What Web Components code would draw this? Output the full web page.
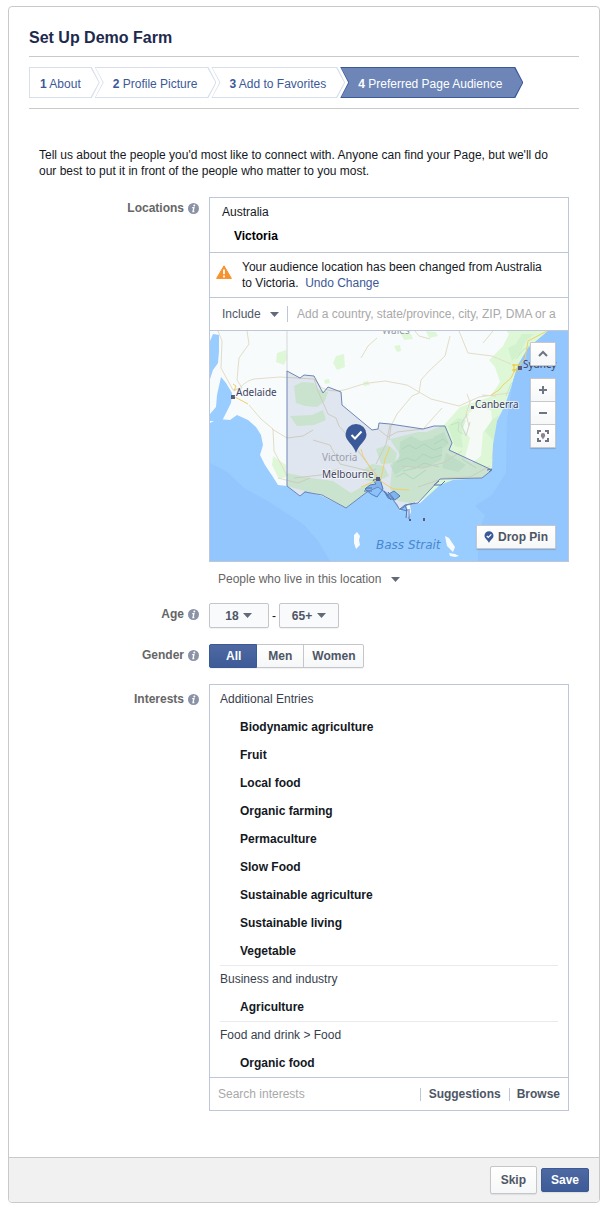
<!DOCTYPE html>
<html lang="en">
<head>
<meta charset="utf-8">
<meta name="viewport" content="width=device-width, initial-scale=1">
<title>Set Up Demo Farm</title>
<style>
  body {
    margin: 6px 8px 5px;
    background: #fff;
    color: #141823;
    font: 12px/16px "Liberation Sans", Arial, sans-serif;
  }
</style>
</head>
<body>
<setup-card>
  <h1 slot="title">Set Up Demo Farm</h1>
  <step-trail slot="steps">
    <step-item number="1" first>About</step-item>
    <step-item number="2">Profile Picture</step-item>
    <step-item number="3">Add to Favorites</step-item>
    <step-item number="4" current>Preferred Page Audience</step-item>
  </step-trail>
  <audience-form></audience-form>
  <action-button slot="actions" size="large">Skip</action-button>
  <action-button slot="actions" primary>Save</action-button>
</setup-card>

<script>
const define = (name, html, setup) => {
  const template = document.createElement('template');
  template.innerHTML = '<style>*, *::before, *::after { box-sizing: border-box; } :host([hidden]) { display: none; }</style>' + html;
  customElements.define(name, class extends HTMLElement {
    constructor() {
      super();
      this.attachShadow({ mode: 'open' }).append(template.content.cloneNode(true));
    }
    connectedCallback() { if (setup) setup(this, this.shadowRoot); }
  });
};

define('setup-card', `
  <style>
    :host { display: block; box-sizing: border-box; border: 1px solid #c8c9cb; border-radius: 4px; overflow: hidden; }
    header { padding: 21px 20px 0; }
    ::slotted(h1) { margin: 0; padding-bottom: 8px; font-size: 16px; line-height: 20px; font-weight: bold; color: #1d2a4d; }
    nav { padding: 10px 0; border: solid #c8c9cb; border-width: 1px 0; }
    main { padding: 38px 30px 46px; }
    footer { display: flex; align-items: center; justify-content: flex-end; gap: 4px; padding: 8px 10px; border-top: 1px solid #c8c9cb; background: #f1f1f1; }
  </style>
  <header>
    <slot name="title"></slot>
    <nav aria-label="Setup steps"><slot name="steps"></slot></nav>
  </header>
  <main><slot></slot></main>
  <footer><slot name="actions"></slot></footer>`);

define('step-trail', `
  <style>:host { display: flex; }</style>
  <slot></slot>`);

define('step-item', `
  <style>
    :host { display: block; flex: none; margin-left: -5px; --edge: #d8dfea; --fill: #fff; --ink: #3b5998; --notch: 8px; }
    :host([first]) { margin-left: 0; --notch: 0px; }
    :host([current]) { --edge: #3b5998; --fill: #6d86b7; --ink: #fff; }
    a {
      position: relative; display: block; height: 31px; padding: 2px 19px 0 18px; line-height: 31px;
      color: var(--ink); text-decoration: none; white-space: nowrap; background: var(--edge);
    }
    a, a::before { clip-path: polygon(0 0, calc(100% - 8px) 0, 100% 50%, calc(100% - 8px) 100%, 0 100%, var(--notch) 50%); }
    a::before { content: ""; position: absolute; inset: 1px; background: var(--fill); }
    :host([first]) a { padding-left: 11px; }
    :host([current]) a { padding-right: 21px; }
    span { position: relative; }
  </style>
  <a href="#"><span><b></b> <slot></slot></span></a>`,
  (host, root) => {
    root.querySelector('b').textContent = host.getAttribute('number');
    if (host.hasAttribute('current')) root.querySelector('a').setAttribute('aria-current', 'step');
  });

define('action-button', `
  <style>
    :host { display: block; }
    button {
      display: block; height: 24px; padding: 0 9px; border: 1px solid #c4c6ca; border-radius: 2px;
      background: linear-gradient(#fff, #f6f7f8); color: #4e5665; font: bold 12px/20px "Liberation Sans", Arial, sans-serif;
      box-shadow: 0 1px 1px rgba(0, 0, 0, .08); cursor: pointer;
    }
    :host([size="large"]) button { height: 28px; padding: 0 10px; }
    :host([primary]) button { border-color: #3b5998; background: linear-gradient(#4e69a2, #3e5b98); color: #fff; }
  </style>
  <button type="button"><slot></slot></button>`);

define('info-icon', `
  <style>:host { display: block; width: 11px; height: 11px; } svg { display: block; }</style>
  <svg width="11" height="11" viewBox="0 0 11 11" aria-hidden="true">
    <circle cx="5.5" cy="5.5" r="5.5" fill="#8b92a6"/>
    <circle cx="6.3" cy="2.6" r="1" fill="#fff"/>
    <path d="M4.2 4.6h1.7L5 8.5h1.3" fill="none" stroke="#fff" stroke-width="1.3"/>
  </svg>`);

define('form-row', `
  <style>
    :host { display: grid; grid-template-columns: 160px minmax(0, 1fr); column-gap: 10px; }
    .label { display: flex; align-items: center; justify-content: flex-end; align-self: start; gap: 4px; padding-top: 3px; color: #666; font-weight: bold; }
    :host([tall]) .label { padding-top: 7px; }
    info-icon { margin-top: 1px; }
  </style>
  <div class="label"><slot name="label"></slot><info-icon></info-icon></div>
  <div><slot></slot></div>`);

define('location-box', `
  <style>
    :host { display: block; border: 1px solid #bdc7d8; }
    dl { margin: 0; padding: 6px 12px 8px; }
    dd { margin: 8px 0 0 12px; font-weight: bold; color: #000; }
    .notice { display: flex; align-items: flex-start; gap: 10px; padding: 6px; border-top: 1px solid #bdc7d8; }
    .notice svg { flex: none; margin-top: 6px; }
    .notice p { margin: 0; padding-right: 8px; }
    ::slotted(.search) { height: 34px; border: solid #bdc7d8; border-width: 1px 0; }
  </style>
  <dl><dt>Australia</dt><dd>Victoria</dd></dl>
  <div class="notice">
    <svg width="16" height="14" viewBox="0 0 16 14" aria-hidden="true">
      <path d="M8 .8 15.4 13.4H.6Z" fill="#f7922d" stroke="#f7922d" stroke-linejoin="round"/>
      <path d="M8 4.4v4.8M8 10.4v2" stroke="#fff" stroke-width="1.8"/>
    </svg>
    <p><slot name="notice"></slot></p>
  </div>
  <slot name="search"></slot>
  <slot></slot>`);

define('region-map', `
  <style>
    :host { display: block; position: relative; height: 230px; overflow: hidden; background: #99ccff; }
    .map { display: block; width: 100%; height: 100%; }
    text { font-family: "Noto Sans", sans-serif; font-size: 10px; fill: #42435c; }
    .halo { paint-order: stroke; stroke: #f9fbfc; stroke-width: 2px; stroke-opacity: .7; }
    .controls { position: absolute; top: 11px; right: 12px; display: grid; width: 26px; }
    button { display: flex; align-items: center; justify-content: center; gap: 4px; height: 24px; padding: 0; border: 1px solid #c6c8cc; border-radius: 1px; background: linear-gradient(#fff, #f6f7f8); color: #4e5665; font: bold 12px/20px "Liberation Sans", Arial, sans-serif; white-space: nowrap; box-shadow: 0 1px 1px rgba(0, 0, 0, .15); cursor: pointer; }
    .controls button + button { margin-top: -1px; }
    .controls button:nth-child(2) { margin-top: 12px; }
    .drop { position: absolute; right: 12px; bottom: 12px; width: 80px; }
  </style>
  <svg class="map" viewBox="0 0 358 230" preserveAspectRatio="xMidYMid slice" role="img" aria-label="Map of Victoria">
    <rect width="358" height="230" fill="#f8fbfc"/>
    <!-- parks and forest -->
    <g fill="#def7d7">
      <path d="M67 22l9-3 1 8-3 7-8-3zM126 25l8-2 1 13-8 3-4-7zM114 49l5-1 1 4-5 1zM166 118l12-4 9 8-2 10-14 1z"/>
      <path d="M288 0h50l-20 17-10 17-5 16-8 24-8 16-4 32v17l-11 8-29 2-32 6-5-3-8-20 16-30 20-8 16-18 30-10 10-15-5-15-6-7 14-14 6-12-8-10z"/>
      <path d="M190 1l11 2 2 5-9 1zM184 15l6-1 1 6-4 1zM216 0l10 1 2 4-9 2zM63 125l13 9v12l-7 2-7-14z"/>
      <path d="M84 55l8-4 12 1 3 6 11 3-3 9-8 6-12-1-9-3zM80 85l22-1 11-5 3 10-12 5-17 1zM153 51l5-1 2 4-6 1zM152 140l10-7 12 2 5 10-14 6-10-2z"/>
      <path d="M180 108l28-7 27 0 6 18 24 13 16 8-9 8-28 2-14 5-14 12-16 5-12-2-8-12 2-22 8-12zM77 142l24 5 22 3 18 12 14-8 10-4 6 6-14 8-20 14-24-14-22-5-14-4z"/>
    </g>
    <path d="M255 88l10-10 16 1 1 10-9 12-2 24-9 7-7-5 5-20-7-10z" fill="#f5faf6"/>
    <path d="M258 83l7-7 9-2 5 6 2 10-7 10z" fill="#f5faf6"/>
    <!-- hill shading -->
    <path d="M190 111l11-6 10 5 13-3 9 8-2 14-16 8-18-1-12 8-5-10 9-6zM223 106l11-5 5 12-6 4zM236 122l20 12-8 7-16-4zM238 95l10-8 8 2-5 14 2 14-8-2zM302 30l8-8 6-12 8-7h-12l-6 10-8 4zM275 100l8-12 7-4-6 26z" fill="#c9ecc7" opacity=".6"/>
    <g fill="none" stroke="#b9dfbb" stroke-width="1" opacity=".7">
      <path d="M192 118l7-4 7 4 8-5 10 6 8-3M187 131l10-4 8 3 8-7 9 4 10-3M193 140l13-3 8-5 15 4M186 146l8-4 9 6 13-9M224 113l9-5 5 4M241 94l8-3-1 9 5 3M306 28l7-9 8-5M296 65l5-12 4-4M266 137l-14-9"/>
    </g>
    <!-- roads -->
    <g fill="none" stroke="#e2ddc7" stroke-width="1">
      <path d="M8 0l4 10-1 27 12 22 9-2-5-8 2-22 10-14-2-13"/>
      <path d="M24 60c10-5 9-9 20-12l26-2 34 2 8 9c19 8 31-3 47-5l16-2 22 4 24 14 28 7 20-9 30-4 14-9 14-10 4-9"/>
      <path d="M39 74l12 14 12 10 1 22 9 17 4 8M62 98l15 9 16-2 10-6"/>
      <path d="M104 48l4 12 10 23 8 4 3 8 8 9 14 20 17 22M103 109l17 5 10 19 29 7 9 6M180 94l-4 19-10 20M240 5l-5 20-17 16-7 8-2 13-7 3-15 18-6 12-2 14M168 98l10 8 9-5 26-3M214 97l18-20M249 0l9 22 24 3 19 8M205 0l4 5 11 3M257 63l3 8-4 12 3 12M272 64l14 1M68 147l20 5 12-5M84 147l27-3 17-6 18 8 20-8M285 104l-3 24M192 135l20 2 21-5 19-12M208 156l26-9 26-1 20-11M151 27l7-12 9-8M283 0l-10 12"/>
    </g>
    <g fill="none" stroke="#d4d6d5" stroke-width="1"><path d="M77 0v41M257 83l-6 10 5 12 4-14"/></g>
    <!-- ocean south and east of the coastline -->
    <path d="M358 0H338L318 17 308 34 303 50 295 74 287 90 283 114 282 139 272 147 243 149 230 154 210 172 200 174 201 181 198 187 197 175 190 180 188 174 182 167 177 161 168 156 157 161 136 177 112 165 95 160 90 165 77 155 68 154 63 146 55 134 50 124 53 114 51 104 46 96 38 89 27 84 20 89 8 88 0 92V230H358Z" fill="#99ccff"/>
    <path d="M11 46l5 6 6 10-1 10-5 10-4 8H0V83l6-7 1-12zM3 3l6 1v16l-1 12-5 7-3 9V10z" fill="#99ccff"/>
    <!-- deep water -->
    <path d="M0 132l17 9 17 16 25 14 17 11 18 12 14 16 12 20H0Z" fill="#92c6fc"/>
    <path d="M358 0H338L318 17 308 34 303 50 297 90 296 142 282 164 265 175 275 184 268 203 268 230H358Z" fill="#92c6fc"/>
    <!-- Bass Strait islands and Port Phillip -->
    <path d="M144 204l3-3 3 4-1 4 1 5-4 4-2-6zM235 205l4 2 6 9-2 5-6-6zM239 222l6 1 4 2-4 1-5-1z" fill="#f8fbfc"/>
    <path d="M155 158l5-4 6-1-3-4 7-1 3 10-6 8-6-3zM174 160l3 4 7-4 6 5-5 4-7-2zM190 178l5-4 2 6z" fill="#8bc2fb" stroke="#4f7fc0" stroke-width="1"/>
    <path d="M154 160h8m-6-3h6m13 4l6 8m-3-8l6 7M195 174l10-2M197 178l-1 9m3-9v10M229 150l-5 4h7l4-4m42-11l5-1-3 3" fill="none" stroke="#5573ac"/>
    <!-- Victoria -->
    <path d="M77 40L90 47 94 44 104 45 113 62 118 56 131 61 132 74 162 99 168 98 169 92 180 93 213 98 224 95 235 95 242 112 239 119 282 139 272 147 230 148 208 172 197 174 190 179 182 167 168 156 157 161 136 177 112 164 95 161 90 165 77 155Z" fill="#3b5998" fill-opacity=".13" stroke="#6e86b5"/>
    <!-- motorways -->
    <g fill="none" stroke="#f2cf68" stroke-width="1">
      <path d="M24 60l2-5-3-2M25 66l13 7M166 148l-5-10-8-13-2-7M171 148l4-20 5-12M167 149l-16 7M169 149l14 9 16 1M337 0l-19 10-3 18-10 11-4 8-8 7-4 5-8 5"/>
      <path d="M302 34h8M302 39h8M304 33v8" stroke="#f3c522"/>
    </g>
    <g fill="#595b78"><path d="M21 64h4v4h-4zM308 35h4v4h-4zM261 75h3v3h-3zM166 146h4v4h-4zM213 187h2v3h-2zM199 188h2v2h-2z"/></g>
    <text class="halo" x="26" y="65">Adelaide</text>
    <text class="halo" x="265" y="77">Canberra</text>
    <text x="313" y="37">Sydney</text>
    <text x="172" y="3" style="fill:#9a9ba5">Wales</text>
    <text x="112" y="130" style="fill:#9c9eac">Victoria</text>
    <text class="halo" x="112" y="147">Melbourne</text>
    <text x="166" y="218" style="font:italic 12px 'DejaVu Sans',sans-serif;fill:#4888d0">Bass Strait</text>
    <path d="M146 122C144 114 135.500 110 135.500 103.500a10.500 10.500 0 0 1 21 0C156.500 110 148 114 146 122Z" fill="#3b5998"/>
    <path d="M141.500 104l3.500 3.500 6.500-7" fill="none" stroke="#fff" stroke-width="2"/>
  </svg>
  <div class="controls">
    <button type="button" aria-label="Collapse map"><svg width="10" height="10"><path d="M1 7l4-4 4 4" fill="none" stroke="#6e7587" stroke-width="2"/></svg></button>
    <button type="button" aria-label="Zoom in"><svg width="10" height="10"><path d="M1 5h8M5 1v8" stroke="#6e7587" stroke-width="2"/></svg></button>
    <button type="button" aria-label="Zoom out"><svg width="10" height="10"><path d="M1 5h8" stroke="#6e7587" stroke-width="2"/></svg></button>
    <button type="button" aria-label="Fit to selection"><svg width="12" height="12"><path d="M1 4V1h3M8 1h3v3M11 8v3H8M4 11H1V8" fill="none" stroke="#6e7587" stroke-width="2"/><path d="M6 9.500C5.500 8 3.800 7 3.800 5.200a2.200 2.200 0 0 1 4.400 0C8.200 7 6.500 8 6 9.500Z" fill="#8b8391"/></svg></button>
  </div>
  <button class="drop" type="button"><svg width="10" height="12" viewBox="0 0 10 12" aria-hidden="true"><path d="M5 12C4 9 .5 7.600.5 4.700a4.500 4.500 0 0 1 9 0C9.500 7.600 6 9 5 12Z" fill="#3b5998"/><path d="M2.800 5l1.500 1.500 3-3.200" fill="none" stroke="#fff" stroke-width="1.200"/></svg>Drop Pin</button>`);

define('interest-group', `
  <style>
    :host { display: block; margin: 0 10px; }
    h2 { margin: 0; font-size: 12px; line-height: 28px; font-weight: normal; color: #373e4d; }
    :host([divided]) h2 { border-top: 1px solid #e9eaed; line-height: 27px; }
    ul { margin: 0; padding: 0 0 0 20px; list-style: none; }
    ::slotted(li) { line-height: 28px; font-weight: bold; color: #141823; }
  </style>
  <h2></h2>
  <ul><slot></slot></ul>`,
  (host, root) => { root.querySelector('h2').textContent = host.getAttribute('heading'); });

define('interest-box', `
  <style>
    :host { display: block; border: 1px solid #bdc7d8; }
    .search { display: flex; align-items: center; height: 33px; padding: 0 8px; border-top: 1px solid #bdc7d8; }
    ::slotted(input) { flex: 1; }
  </style>
  <slot></slot>
  <div class="search"><slot name="search"></slot></div>`);

const arrow = `url("data:image/svg+xml,%3Csvg xmlns='http://www.w3.org/2000/svg' width='9' height='5'%3E%3Cpath d='M0 0h9L4.500 5z' fill='%23626a7a'/%3E%3C/svg%3E")`;

define('audience-form', `
  <style>
    :host { display: block; }
    p { margin: 0 0 18px; padding-right: 10px; }
    form { display: grid; gap: 16px; }
    a { color: #3b5998; text-decoration: none; }
    input, select, button { margin: 0; border: 0; border-radius: 0; outline: 0; padding: 0; background-color: transparent; font: inherit; color: inherit; }
    input { min-width: 0; height: 16px; }
    input::placeholder { color: #a9a9a9; opacity: 1; }
    select { appearance: none; background-image: ${arrow}; background-repeat: no-repeat; background-position: right 1px center; height: 16px; cursor: pointer; }
    .search { display: flex; align-items: center; padding: 0 9px 0 12px; }
    .search select { width: 58px; color: #4e5665; }
    .search input { flex: 1; margin-left: 7px; padding: 0 0 0 9px; border-left: 1px solid #bdc7d8; }
    .people { display: block; width: 183px; margin: 9px 0 0 9px; color: #666; }
    .ages { display: flex; align-items: center; gap: 3px; }
    .ages select {
      width: 60px; height: 25px; padding-right: 14px; border: 1px solid #c4c6ca; border-radius: 2px;
      background-color: #f9fafb; background-position: right 16px center; box-shadow: 0 1px 1px rgba(0, 0, 0, .06);
      color: #4e5665; font-weight: bold; text-align: center; text-align-last: center;
    }
    .ages #age-max { background-position: right 12px center; }
    fieldset { display: flex; width: max-content; margin: 0; padding: 0; border: 1px solid #c4c6ca; border-radius: 2px; background: linear-gradient(#fff, #f6f7f8); box-shadow: 0 1px 1px rgba(0, 0, 0, .06); }
    fieldset label { position: relative; padding: 0 11px; line-height: 22px; font-weight: bold; color: #4e5665; }
    fieldset label:first-child { padding: 0 15px 0 16px; }
    fieldset label:last-child { padding: 0 8px; border-left: 1px solid #c4c6ca; }
    fieldset input { position: absolute; inset: 0; width: 100%; height: 100%; opacity: 0; cursor: pointer; }
    fieldset label:has(input:checked) { margin: -1px 0 -1px -1px; border: 1px solid #3b5998; border-radius: 2px 0 0 2px; background: linear-gradient(#4e69a2, #3e5b98); color: #fff; }
    .more { padding: 0 0 0 8px; border-left: 1px solid #bdc7d8; line-height: 13px; color: #4e5665; font-weight: bold; cursor: pointer; }
    .more + .more { margin-left: 8px; padding-left: 7px; }
  </style>
  <p>Tell us about the people you'd most like to connect with. Anyone can find your Page, but we'll do our best to put it in front of the people who matter to you most.</p>
  <form>
    <form-row>
      <label slot="label" for="location">Locations</label>
      <location-box>
        <span slot="notice">Your audience location has been changed from Australia to Victoria.&nbsp; <a href="#">Undo Change</a></span>
        <div class="search" slot="search">
          <select aria-label="Include or exclude"><option>Include</option></select>
          <input id="location" type="text" placeholder="Add a country, state/province, city, ZIP, DMA or a">
        </div>
        <region-map></region-map>
      </location-box>
      <select class="people" aria-label="Relation to location"><option>People who live in this location</option></select>
    </form-row>
    <form-row>
      <label slot="label" for="age-min">Age</label>
      <div class="ages">
        <select id="age-min"><option>18</option></select>
        <span>-</span>
        <select id="age-max" aria-label="Maximum age"><option>65+</option></select>
      </div>
    </form-row>
    <form-row>
      <span slot="label" id="gender-label">Gender</span>
      <fieldset aria-labelledby="gender-label">
        <label><input type="radio" name="gender" checked>All</label>
        <label><input type="radio" name="gender">Men</label>
        <label><input type="radio" name="gender">Women</label>
      </fieldset>
    </form-row>
    <form-row tall>
      <label slot="label" for="interest">Interests</label>
      <interest-box>
        <interest-group heading="Additional Entries">
          <li>Biodynamic agriculture</li>
          <li>Fruit</li>
          <li>Local food</li>
          <li>Organic farming</li>
          <li>Permaculture</li>
          <li>Slow Food</li>
          <li>Sustainable agriculture</li>
          <li>Sustainable living</li>
          <li>Vegetable</li>
        </interest-group>
        <interest-group heading="Business and industry" divided>
          <li>Agriculture</li>
        </interest-group>
        <interest-group heading="Food and drink &gt; Food" divided>
          <li>Organic food</li>
        </interest-group>
        <input slot="search" id="interest" type="text" placeholder="Search interests">
        <button class="more" slot="search" type="button">Suggestions</button>
        <button class="more" slot="search" type="button">Browse</button>
      </interest-box>
    </form-row>
  </form>`);
</script>
</body>
</html>
